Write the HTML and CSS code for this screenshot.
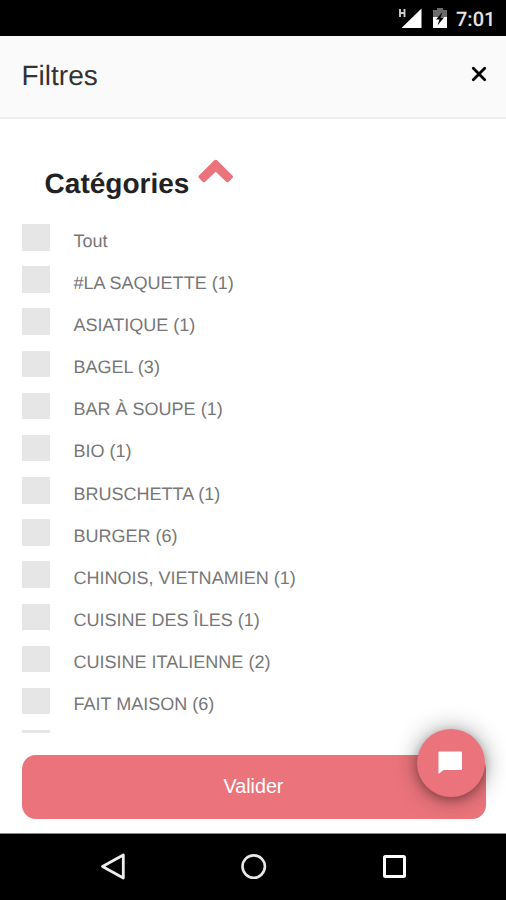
FILE: index.html
```html
<!DOCTYPE html>
<html lang="fr">
<head>
<meta charset="utf-8">
<title>Filtres</title>
<link rel="stylesheet" href="styles.css">
</head>
<body>
<div class="screen">
  <div class="status">
    <svg class="signal" width="26" height="22" viewBox="0 0 26 22"><path d="M23.500 0.500v19.500h-20z" fill="#fff"/><path d="M2 1v8M6.500 1v8M2 5h4.500" stroke="#ccc" stroke-width="1.900" fill="none"/></svg>
    <svg class="battery" width="14" height="20" viewBox="0 0 14 20"><path d="M4 0h6v2h4v8H0V2h4z" fill="#6b6b6b"/><path d="M0 9h14v11H0z" fill="#fff"/><path d="M9.500 4L3 11.500h3.500L4.500 17.500l6.500-8H7.500z" fill="#000"/></svg>
    <span class="clock">7:01</span>
  </div>
  <header class="header">
    <h1>Filtres</h1>
    <svg class="close" width="16" height="16" viewBox="0 0 16 16"><path d="M2.300 2.300l11.400 11.400M13.700 2.300L2.300 13.700" stroke="#000" stroke-width="2.800" stroke-linecap="round"/></svg>
  </header>
  <main class="content">
    <div class="section">
      <h2>Catégories</h2>
      <svg class="chevron" width="36" height="28" viewBox="0 0 36 28"><path d="M1 19.500L16.300 4.300q1.400-1.300 2.800 0L34.400 19.500q1.200 1.200 0 2.400l-3.600 3.800q-1.300 1.300-2.600 0L17.700 15.800 7.200 25.700q-1.300 1.300-2.600 0L1 21.900q-1.200-1.200 0-2.400z" fill="#eb747c"/></svg>
    </div>
    <ul class="list">
      <li><i class="box"></i><span>Tout</span></li>
      <li><i class="box"></i><span>#LA SAQUETTE (1)</span></li>
      <li><i class="box"></i><span>ASIATIQUE (1)</span></li>
      <li><i class="box"></i><span>BAGEL (3)</span></li>
      <li><i class="box"></i><span>BAR À SOUPE (1)</span></li>
      <li><i class="box"></i><span>BIO (1)</span></li>
      <li><i class="box"></i><span>BRUSCHETTA (1)</span></li>
      <li><i class="box"></i><span>BURGER (6)</span></li>
      <li><i class="box"></i><span>CHINOIS, VIETNAMIEN (1)</span></li>
      <li><i class="box"></i><span>CUISINE DES ÎLES (1)</span></li>
      <li><i class="box"></i><span>CUISINE ITALIENNE (2)</span></li>
      <li><i class="box"></i><span>FAIT MAISON (6)</span></li>
      <li><i class="box"></i></li>
    </ul>
  </main>
  <footer class="footer">
    <button class="submit">Valider</button>
    <div class="fab"><svg width="26" height="26" viewBox="0 0 26 26"><path d="M1.500 1.500H23q1 0 1 1V19q0 1-1 1H5.500L.500 24V2.500q0-1 1-1z" fill="#fff"/></svg></div>
  </footer>
  <nav class="nav">
    <svg width="30" height="30" viewBox="0 0 30 30"><path d="M4.500 14.500L25.300 3v23z" fill="none" stroke="#eee" stroke-width="2.800" stroke-linejoin="round"/></svg>
    <svg width="30" height="30" viewBox="0 0 30 30"><circle cx="14.700" cy="14.600" r="11.200" fill="none" stroke="#e8e8e8" stroke-width="2.600"/></svg>
    <svg width="30" height="30" viewBox="0 0 30 30"><rect x="4.500" y="4.500" width="20" height="20" rx="1" fill="none" stroke="#fff" stroke-width="3"/></svg>
  </nav>
</div>
</body>
</html>
```
FILE: styles.css
```css
* { box-sizing: border-box; }
body {
  margin: 0;
  font-family: "Liberation Sans", Arial, sans-serif;
  text-rendering: geometricPrecision;
  background: #fff;
}
.screen {
  display: flex;
  flex-direction: column;
  width: 506px;
  height: 900px;
  overflow: hidden;
}
.status {
  display: flex;
  align-items: flex-start;
  height: 35.500px;
  flex: none;
  padding: 8px 0 0 398px;
  background: #000;
}
.battery { margin-left: 9px; }
.clock {
  margin: 0 0 0 9px;
  font: 500 20px/22px Roboto, sans-serif;
  color: #e4e4e4;
}
.header {
  display: flex;
  align-items: center;
  justify-content: space-between;
  height: 83.500px;
  flex: none;
  padding: 0 19.500px 0 21.500px;
  background: #fafafa;
  border-bottom: 2px solid #efefef;
}
h1 {
  margin: -1px 0 0;
  font-size: 28px;
  font-weight: 400;
  line-height: 32px;
  color: #333;
}
.close { margin-top: -5px; }
.content {
  height: 614px;
  flex: none;
  overflow: hidden;
}
.section {
  display: flex;
  align-items: flex-start;
  height: 105px;
  padding: 37px 0 0 44.600px;
}
h2 {
  margin: 12px 0 0;
  font-size: 28px;
  line-height: 32px;
  color: #222;
}
.chevron { margin-left: 8.500px; }
.list {
  margin: 0;
  padding: 0 0 0 22px;
  list-style: none;
}
.list li {
  display: flex;
  align-items: flex-start;
  height: 42.18px;
}
.box {
  width: 28px;
  height: 26.500px;
  background: #e6e6e6;
}
.list span {
  margin: 5.600px 0 0 23.400px;
  font-size: 18.040px;
  line-height: 22px;
  color: #777;
}
.footer {
  position: relative;
  height: 100px;
  flex: none;
  padding: 21.500px 20px 0 22px;
}
.submit {
  display: block;
  width: 464px;
  height: 64px;
  padding: 0 1px 0 0;
  border: 0;
  border-radius: 14px;
  background: #eb747c;
  color: #fff;
  font: 19.700px "Liberation Sans", Arial, sans-serif;
}
.fab {
  position: absolute;
  right: 21.500px;
  top: -4.500px;
  display: flex;
  align-items: center;
  justify-content: center;
  width: 68px;
  height: 68px;
  border-radius: 50%;
  background: #eb747c;
  box-shadow: 0 3px 8px rgba(0, 0, 0, .24), 0 1px 24px rgba(0, 0, 0, .4);
}
.nav {
  display: flex;
  align-items: flex-start;
  gap: 111px;
  flex: 1;
  padding: 18px 0 0 98px;
  background: #000;
  border-top: 1px solid #888;
}
```
